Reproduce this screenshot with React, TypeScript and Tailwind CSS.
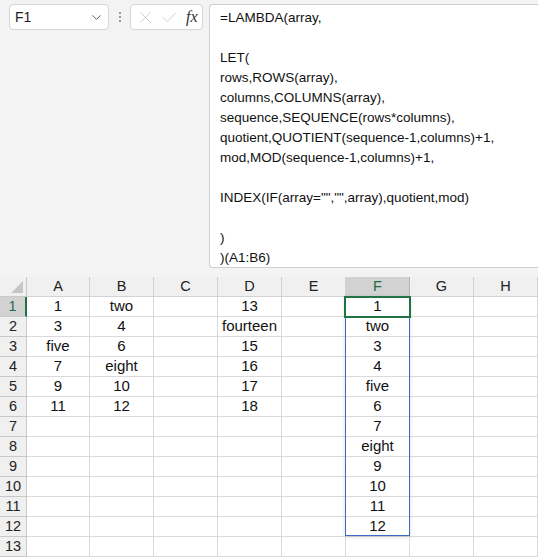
import { ChevronDown, X, Check } from "lucide-react";

const COLS = ["A", "B", "C", "D", "E", "F", "G", "H"];

const FORMULA = [
  "=LAMBDA(array,",
  "",
  "LET(",
  "rows,ROWS(array),",
  "columns,COLUMNS(array),",
  "sequence,SEQUENCE(rows*columns),",
  "quotient,QUOTIENT(sequence-1,columns)+1,",
  "mod,MOD(sequence-1,columns)+1,",
  "",
  'INDEX(IF(array="","",array),quotient,mod)',
  "",
  ")",
  ")(A1:B6)",
];

const source: Record<string, string[]> = {
  A: ["1", "3", "five", "7", "9", "11"],
  B: ["two", "4", "6", "eight", "10", "12"],
  D: ["13", "fourteen", "15", "16", "17", "18"],
};

const spill = ["1", "two", "3", "4", "five", "6", "7", "eight", "9", "10", "11", "12"];

function cellValue(col: string, row: number) {
  if (col === "F") return spill[row] ?? "";
  return source[col]?.[row] ?? "";
}

function FormulaBar() {
  return (
    <div className="flex items-start pt-[4px] h-[269px]">
      {/* Name box */}
      <div className="ml-[9px] w-[100px] h-[26px] bg-white border border-[#d6d6d6] rounded-[4px] flex items-center pl-[5px] pr-[4px]">
        <span className="flex-1 text-[14px] text-[#222]">F1</span>
        <ChevronDown size={15} strokeWidth={1.5} className="text-[#555]" />
      </div>
      {/* Dots */}
      <div className="w-[21px] h-[26px] flex flex-col items-center justify-center gap-[2px]">
        <span className="w-[2px] h-[2px] bg-[#999]" />
        <span className="w-[2px] h-[2px] bg-[#999]" />
        <span className="w-[2px] h-[2px] bg-[#999]" />
      </div>
      {/* Cancel / enter / fx */}
      <div className="w-[73px] h-[26px] bg-white border border-[#d6d6d6] rounded-[4px] flex items-center pl-[5px] gap-[5px]">
        <X size={19} strokeWidth={1} className="text-[#c4c4c4]" />
        <Check size={19} strokeWidth={1} className="text-[#c4c4c4]" />
        <span className="ml-[2px] text-[16px] italic text-[#333] [font-family:'Liberation_Serif',serif]">fx</span>
      </div>
      {/* Formula text */}
      <div className="ml-[6px] flex-1 h-[264px] bg-white border border-r-0 border-[#d0d0d0] rounded-l-[4px] pl-[10px] pt-[3px]">
        {FORMULA.map((line, i) => (
          <div key={i} className="h-[20px] leading-[20px] text-[13.5px] text-[#111] whitespace-pre">
            {line}
          </div>
        ))}
      </div>
    </div>
  );
}

function Grid() {
  const rows = Array.from({ length: 13 }, (_, i) => i);
  return (
    <div className="relative mt-[8px]">
      <div className="grid grid-cols-[27px_63px_repeat(7,64px)] grid-rows-[20px_repeat(13,20px)]">
        {/* corner */}
        <div className="bg-[#f0f0f0] border-r border-b border-[#c8c8c8] relative">
          <div className="absolute right-[3px] bottom-[3px] w-0 h-0 border-l-[12px] border-l-transparent border-b-[12px] border-b-[#c6c6c6]" />
        </div>
        {COLS.map((c) => (
          <div
            key={c}
            className={
              c === "F"
                ? "bg-[#d2d2d2] border-r border-b border-[#b8b8b8] flex items-center justify-center text-[14.5px] text-[#1e6b45]"
                : "bg-[#f0f0f0] border-r border-b border-[#d2d2d2] flex items-center justify-center text-[14.5px] text-[#222]"
            }
          >
            {c}
          </div>
        ))}
        {rows.map((r) => (
          <div key={r} className="contents">
            <div
              className={
                r === 0
                  ? "bg-[#d2d2d2] border-r-2 border-r-[#217346] border-b border-b-[#c8c8c8] flex items-center justify-center text-[14.5px] text-[#1e6b45]"
                  : "bg-[#f0f0f0] border-r border-b border-[#c8c8c8] flex items-center justify-center text-[14.5px] text-[#222]"
              }
            >
              {r + 1}
            </div>
            {COLS.map((c) => (
              <div
                key={c}
                className="bg-white border-r border-b border-[#dadada] flex items-center justify-center text-[15px] text-[#111] whitespace-nowrap overflow-visible"
              >
                {cellValue(c, r)}
              </div>
            ))}
          </div>
        ))}
      </div>
      {/* spill range */}
      <div className="absolute left-[345px] top-[19px] w-[65px] h-[240px] border border-[#3a6cc6] shadow-[0_1px_4px_rgba(0,0,0,0.15)] pointer-events-none" />
      {/* active cell */}
      <div className="absolute left-[344px] top-[19px] w-[67px] h-[22px] border-2 border-[#217346] pointer-events-none" />
    </div>
  );
}

export default function App() {
  return (
    <div className="w-[538px] h-[557px] overflow-hidden bg-[#f3f3f3] [font-family:'Liberation_Sans',Arial,sans-serif]">
      <FormulaBar />
      <Grid />
    </div>
  );
}
